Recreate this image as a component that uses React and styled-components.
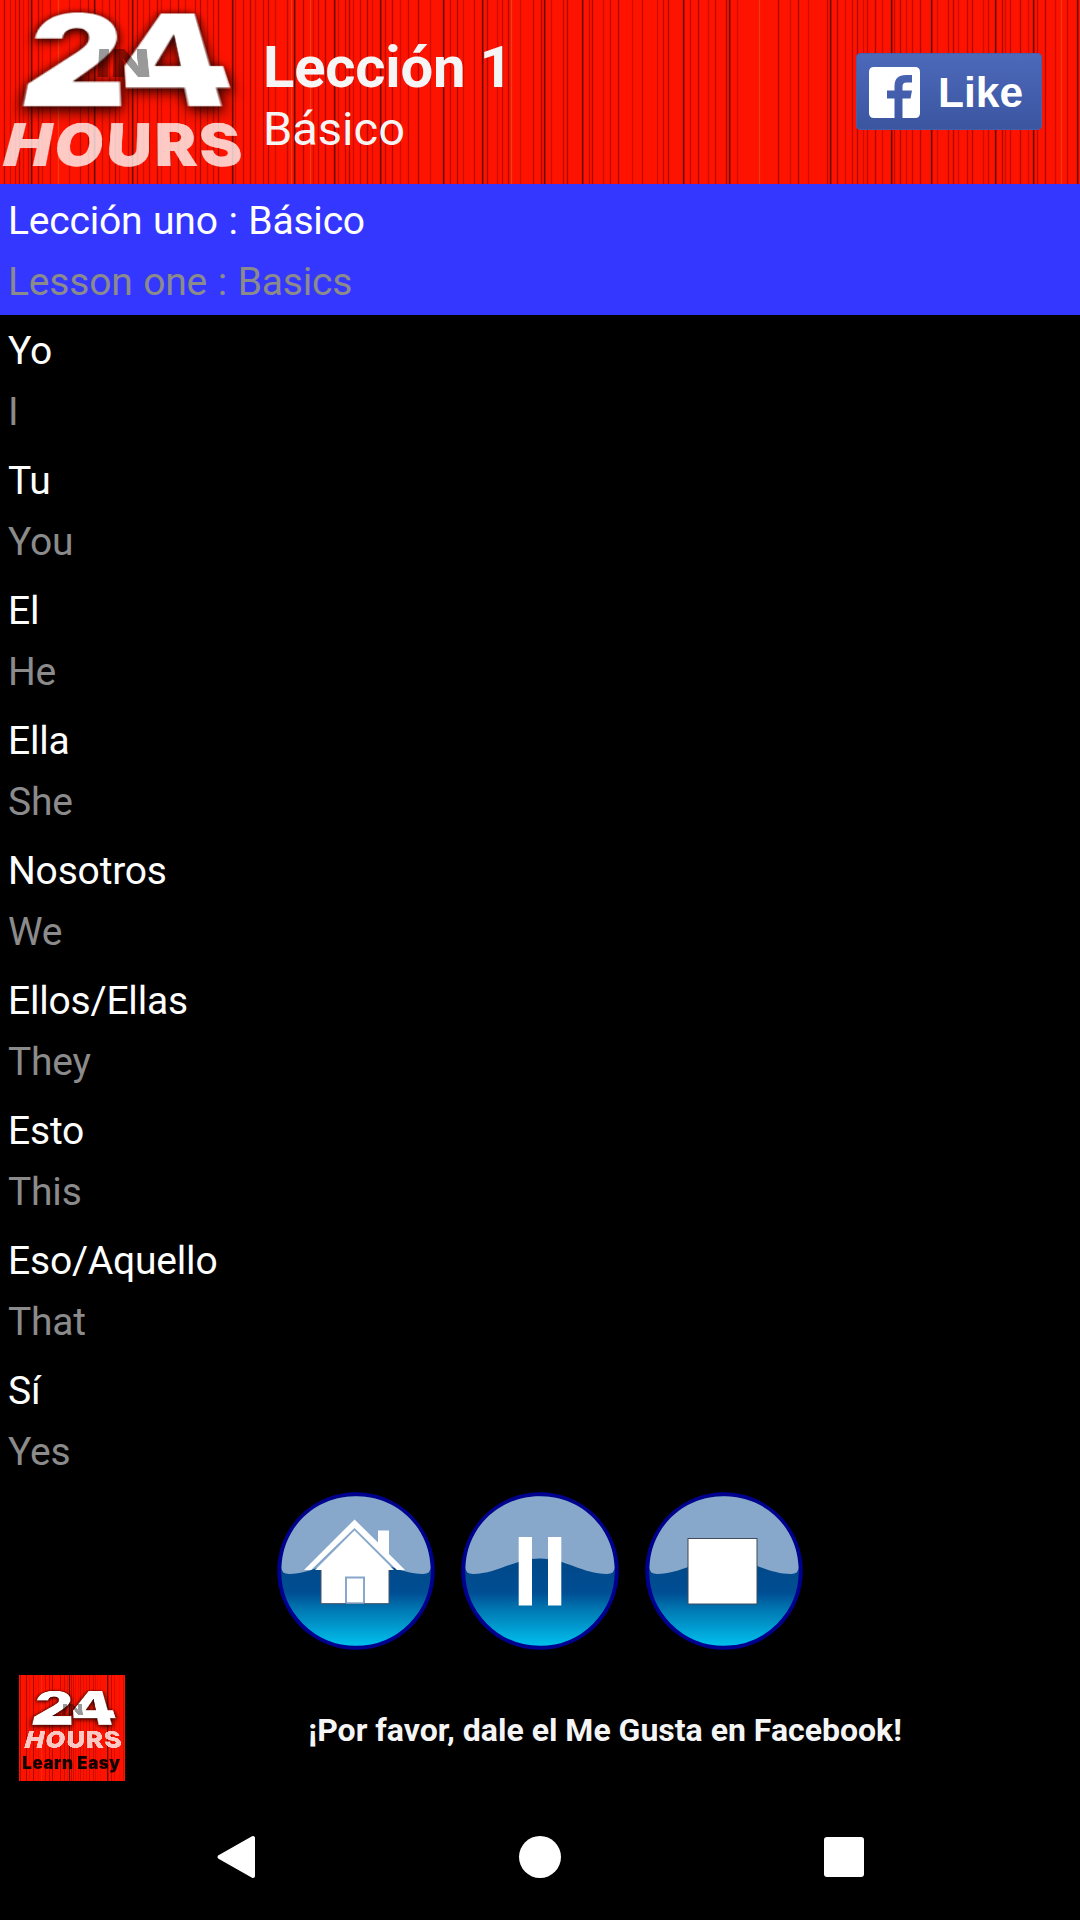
import React from "react";
import styled, { createGlobalStyle } from "styled-components";

const GlobalStyle = createGlobalStyle`
  html, body { margin: 0; padding: 0; background: #000; }
  body { font-family: Roboto, "Liberation Sans", sans-serif; overflow: hidden; }
  * { box-sizing: border-box; }
`;

/* ---------- wood-grain stripes ---------- */

const STRONG = [31, 94, 132, 232, 294, 334, 380, 443, 482, 544, 582, 683, 729, 830, 891, 931, 995, 1033, 1077];
const SOFT = [
  4, 10, 15, 19, 23, 28, 38, 42, 50, 59, 69, 80, 88, 102, 109, 115, 119, 128, 137, 143, 149, 157, 161, 170, 178,
  185, 195, 200, 207, 213, 218, 235, 243, 250, 255, 263, 268, 275, 287, 303, 313, 318, 325, 338, 345, 349, 353,
  360, 367, 372, 385, 392, 400, 408, 418, 430, 450, 457, 463, 474, 487, 497, 502, 508, 520, 533, 541, 551, 563,
  567, 569, 589, 592, 603, 610, 618, 632, 642, 644, 657, 663, 668, 670, 690, 698, 708, 715, 726, 737, 739, 778,
  790, 792, 798, 808, 827, 837, 845, 852, 857, 863, 867, 875, 882, 894, 900, 906, 912, 920, 937, 948, 953, 958,
  967, 972, 983, 988, 1002, 1005, 1010, 1020, 1028, 1037, 1045, 1055, 1067,
];
const GLOW = [57, 178, 290, 309, 408, 443, 510, 610, 658, 758, 857, 959, 1060];

const grain = (scale) => {
  const lines = [
    ...SOFT.map((x, i) => [x, i % 3 === 0 ? "#a80a00" : i % 3 === 1 ? "#cc0e00" : "#bc0c00", 1]),
    ...GLOW.map((x) => [x + 1, "#ee3c14", 1]),
    ...STRONG.map((x) => [x, "#640600", 1.2]),
  ].sort((a, b) => a[0] - b[0]);
  const stops = [];
  let end = 0;
  lines.forEach(([x, color, w]) => {
    if (x < end) return;
    const at = (v) => `${(v * scale).toFixed(2)}px`;
    stops.push(`#fe1200 ${at(x - 0.6)}`, `${color} ${at(x + 0.1)} ${at(x + w - 0.1)}`, `#fe1200 ${at(x + w + 0.6)}`);
    end = x + w + 1.2;
  });
  return `linear-gradient(90deg, ${stops.join(", ")})`;
};

const HEADER_GRAIN = grain(1);
const BADGE_GRAIN = grain(0.38);

/* ---------- warped lettering ---------- */

const FONT_SIZE = 100;
const LINE = 76;

const squareToQuad = ([[x0, y0], [x1, y1], [x2, y2], [x3, y3]]) => {
  const dx1 = x1 - x2, dx2 = x3 - x2, sx = x0 - x1 + x2 - x3;
  const dy1 = y1 - y2, dy2 = y3 - y2, sy = y0 - y1 + y2 - y3;
  const det = dx1 * dy2 - dx2 * dy1;
  const g = (sx * dy2 - dx2 * sy) / det;
  const h = (dx1 * sy - sx * dy1) / det;
  return [x1 - x0 + g * x1, x3 - x0 + h * x3, x0, y1 - y0 + g * y1, y3 - y0 + h * y3, y0, g, h];
};

const warp = (text, family, weight, spacing, quad) => {
  const ctx = document.createElement("canvas").getContext("2d");
  ctx.font = `${weight} ${FONT_SIZE}px ${family}`;
  const m = ctx.measureText(text);
  const left = -m.actualBoundingBoxLeft;
  const w = m.actualBoundingBoxRight - left + spacing * (text.length - 1);
  const base = (LINE - m.fontBoundingBoxAscent - m.fontBoundingBoxDescent) / 2 + m.fontBoundingBoxAscent;
  const top = base - m.actualBoundingBoxAscent;
  const hgt = m.actualBoundingBoxAscent + m.actualBoundingBoxDescent;
  const [a, b, c, d, e, f, g, h] = squareToQuad(quad);
  const row = (p, q, r) => [p / w, q / hgt, r - (p * left) / w - (q * top) / hgt];
  const [A, B, C] = row(a, b, c);
  const [D, E, F] = row(d, e, f);
  const [G, H, I] = row(g, h, 1);
  return `matrix3d(${[A, D, 0, G, B, E, 0, H, 0, 0, 1, 0, C, F, 0, I].map((v) => v.toFixed(8)).join(",")})`;
};

const Letters = styled.span`
  position: absolute;
  left: 0;
  top: 0;
  font: ${(p) => p.$weight} ${FONT_SIZE}px/${LINE}px ${(p) => p.$family};
  letter-spacing: ${(p) => p.$spacing}px;
  color: ${(p) => p.$color};
  text-shadow: ${(p) => p.$shadow || "none"};
  white-space: nowrap;
  transform-origin: 0 0;
`;

const Warped = ({ text, quad, color, shadow, spacing = 0, family = "Inter, sans-serif", weight = 900 }) => (
  <Letters
    $weight={weight}
    $family={family}
    $spacing={spacing}
    $color={color}
    $shadow={shadow}
    style={{ transform: warp(text, family, weight, spacing, quad) }}
  >
    {text}
  </Letters>
);

/* ---------- page ---------- */

const Screen = styled.main`
  width: 1080px;
  height: 1920px;
  display: flex;
  flex-direction: column;
  background: #000;
  overflow: hidden;
`;

const Header = styled.header`
  height: 184px;
  flex: none;
  display: flex;
  align-items: center;
  padding-right: 38px;
  background: ${HEADER_GRAIN};
`;

const Logo = styled.div`
  position: relative;
  width: 263px;
  height: 184px;
  flex: none;
`;

const Titles = styled.div`
  flex: 1;
  display: flex;
  flex-direction: column;
  padding-top: 5px;
  color: #f5f5f5;
`;

const Title = styled.h1`
  margin: 0;
  font-size: 58px;
  line-height: 68px;
  font-weight: 700;
  letter-spacing: -0.2px;
`;

const Subtitle = styled.div`
  font-size: 47px;
  line-height: 55px;
`;

const LikeButton = styled.button`
  width: 186px;
  height: 77px;
  margin-bottom: 1px;
  padding: 1px 0 0 12px;
  border: 1px solid #4560ad;
  border-radius: 4px;
  display: flex;
  align-items: center;
  gap: 18px;
  background: linear-gradient(#4c69ba, #3b55a0);
  color: #fff;
  font: 700 42.5px/1 "Liberation Sans", sans-serif;
`;

const LikeLabel = styled.span`
  padding-top: 3px;
`;

const List = styled.ul`
  list-style: none;
  margin: 0;
  padding: 0;
  height: 1301px;
  flex: none;
`;

const Item = styled.li`
  height: ${(p) => (p.$active ? 131 : 130)}px;
  margin-bottom: ${(p) => (p.$active ? -1 : 0)}px;
  padding: 7px 8px 0;
  background: ${(p) => (p.$active ? "#3437ff" : "transparent")};
  font-size: 39px;
  line-height: 61px;
  letter-spacing: -0.2px;
  word-spacing: 1.2px;
`;

const Phrase = styled.div`
  color: ${(p) => (p.$muted ? "#8b8b8b" : "#fff")};
`;

const Controls = styled.div`
  height: 174px;
  margin-top: 1px;
  flex: none;
  display: flex;
  justify-content: center;
  gap: 26px;
  padding-top: 6px;
`;

const RoundButton = styled.button`
  width: 158px;
  height: 158px;
  padding: 0;
  border: 0;
  background: none;
`;

const Banner = styled.footer`
  height: 136px;
  flex: none;
  display: flex;
  align-items: center;
  padding: 0 0 0 19px;
`;

const Badge = styled.div`
  position: relative;
  width: 106px;
  height: 106px;
  background: ${BADGE_GRAIN};
`;

const Message = styled.div`
  flex: 1;
  padding: 4px 0 0 5px;
  text-align: center;
  color: #f5f5f5;
  font-size: 32px;
  line-height: 38px;
  font-weight: 700;
`;

const NavBar = styled.nav`
  flex: 1;
  display: flex;
  justify-content: space-between;
  align-items: center;
  padding: 0 216px 3px;
`;

const phrases = [
  ["Lección uno : Básico", "Lesson one : Basics"],
  ["Yo", "I"],
  ["Tu", "You"],
  ["El", "He"],
  ["Ella", "She"],
  ["Nosotros", "We"],
  ["Ellos/Ellas", "They"],
  ["Esto", "This"],
  ["Eso/Aquello", "That"],
  ["Sí", "Yes"],
];

const FacebookMark = () => (
  <svg width="51" height="51" viewBox="0 0 51 51">
    <path
      fill="#fff"
      d="M5 0H46Q51 0 51 5V46Q51 51 46 51H33.5V31.5H41.5L43 23.5H33.5V19.5Q33.5 15.5 37.5 15.5H43V8H37Q25.5 8 25.5 19V23.5H18V31.5H25.5V51H5Q0 51 0 46V5Q0 0 5 0Z"
    />
  </svg>
);

const Orb = ({ label, id, children }) => (
  <RoundButton aria-label={label}>
    <svg width="158" height="158" viewBox="0 0 158 158">
      <defs>
        <linearGradient id={id} x1="0" y1="0" x2="0" y2="1">
          <stop offset="0.5" stopColor="#004a8c" />
          <stop offset="0.64" stopColor="#004e93" />
          <stop offset="0.76" stopColor="#007bb5" />
          <stop offset="1" stopColor="#00c4f0" />
        </linearGradient>
      </defs>
      <circle cx="79" cy="79" r="76.8" fill={`url(#${id})`} stroke="#00008e" strokeWidth="4" />
      <path
        fill="#87a8cb"
        d="M4.5 75C6 35 38 4.300 79 4.300S152 35 153.500 75Q154 82 146 82C122 82 104 66.500 79 66.500S36 82 12 82Q4 82 4.500 75Z"
      />
      {children}
    </svg>
  </RoundButton>
);

export default function App() {
  return (
    <Screen>
      <GlobalStyle />
      <Header>
        <Logo>
          <Warped
            text="24"
            color="#fff"
            spacing={-3}
            shadow="0 3px 8px rgba(20,0,0,.8), 0 0 6px rgba(20,0,0,.7)"
            quad={[[40, 13], [206, 13], [237, 107], [20, 107]]}
          />
          <Warped text="IN" color="rgba(0,0,0,.4)" quad={[[99, 49], [147, 49], [150, 77], [97, 77]]} />
          <Warped
            text="HOURS"
            color="rgba(255,255,255,.77)"
            spacing={4}
            quad={[[14, 123], [236, 123], [243, 167], [2, 167]]}
          />
        </Logo>
        <Titles>
          <Title>Lección 1</Title>
          <Subtitle>Básico</Subtitle>
        </Titles>
        <LikeButton>
          <FacebookMark />
          <LikeLabel>Like</LikeLabel>
        </LikeButton>
      </Header>
      <List>
        {phrases.map(([es, en], i) => (
          <Item key={es} $active={i === 0}>
            <Phrase>{es}</Phrase>
            <Phrase $muted>{en}</Phrase>
          </Item>
        ))}
      </List>
      <Controls>
        <Orb label="Home" id="orb-home">
          <path
            fill="#fff"
            d="M77.500 27.500L101 50.500V38.500H112V62L128 78H120L77.500 36L34 78H27Z"
          />
          <path fill="#fff" d="M77.500 38.500L117 78H112V111.500H44V78H38Z" />
          <path d="M44 78V111.700H112V78" fill="none" stroke="#4a5468" strokeWidth="1" />
          <path d="M69 111V85.500H87V111" fill="none" stroke="#87a8cb" strokeWidth="2" />
          <path d="M69 111H87" stroke="#87a8cb" strokeWidth="1.500" />
        </Orb>
        <Orb label="Pause" id="orb-pause">
          <path fill="#fff" d="M57.700 45H71V113.500H57.700ZM87 45H100.300V113.500H87Z" />
        </Orb>
        <Orb label="Stop" id="orb-stop">
          <rect x="43" y="46.500" width="69" height="65.500" fill="#fff" stroke="#3f4a5a" strokeWidth="1" />
        </Orb>
      </Controls>
      <Banner>
        <Badge>
          <Warped
            text="24"
            color="#fff"
            spacing={-3}
            shadow="0 3px 8px rgba(20,0,0,.8), 0 0 6px rgba(20,0,0,.7)"
            quad={[[20, 16], [88, 16], [99, 50], [12, 50]]}
          />
          <Warped text="IN" color="rgba(0,0,0,.4)" quad={[[44, 29], [63, 29], [64, 40], [43, 40]]} />
          <Warped
            text="HOURS"
            color="rgba(255,255,255,.77)"
            spacing={4}
            quad={[[10, 56], [100, 56], [103, 73], [5, 73]]}
          />
          <Warped
            text="Learn Easy"
            color="#100"
            spacing={3}
            quad={[[4, 82], [101, 82], [101, 98], [4, 98]]}
          />
        </Badge>
        <Message>¡Por favor, dale el Me Gusta en Facebook!</Message>
      </Banner>
      <NavBar>
        <svg width="40" height="44" viewBox="0 0 40 44">
          <path d="M37 3V41L3.500 22Z" fill="#fff" stroke="#fff" strokeWidth="4" strokeLinejoin="round" />
        </svg>
        <svg width="42" height="42" viewBox="0 0 42 42">
          <circle cx="21" cy="21" r="21" fill="#fff" />
        </svg>
        <svg width="40" height="40" viewBox="0 0 40 40">
          <rect width="40" height="40" rx="3" fill="#fff" />
        </svg>
      </NavBar>
    </Screen>
  );
}
